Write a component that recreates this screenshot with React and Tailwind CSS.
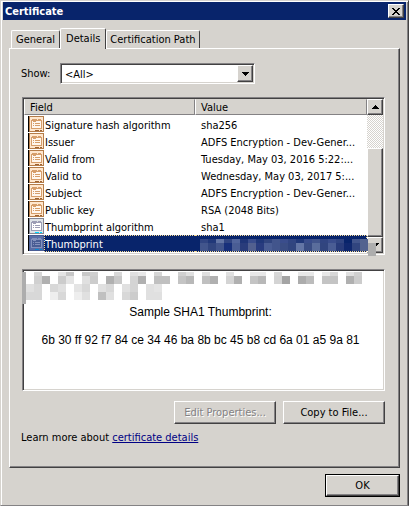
import React from 'react';

const FONT = 'font-["DejaVu_Sans_Condensed","Noto_Sans",sans-serif]';

const raised =
  'border border-t-white border-l-white border-r-[#424142] border-b-[#424142] bg-[#d6d3ce] shadow-[inset_-1px_-1px_0_#848284]';
const sunken =
  'border border-t-[#848284] border-l-[#848284] border-r-white border-b-white shadow-[inset_1px_1px_0_#424142,inset_-1px_-1px_0_#d6d3ce]';

const fields = [
  { name: 'Signature hash algorithm', value: 'sha256', tone: 'orange' },
  { name: 'Issuer', value: 'ADFS Encryption - Dev-Gener...', tone: 'orange' },
  { name: 'Valid from', value: 'Tuesday, May 03, 2016 5:22:...', tone: 'orange' },
  { name: 'Valid to', value: 'Wednesday, May 03, 2017 5:...', tone: 'orange' },
  { name: 'Subject', value: 'ADFS Encryption - Dev-Gener...', tone: 'orange' },
  { name: 'Public key', value: 'RSA (2048 Bits)', tone: 'orange' },
  { name: 'Thumbprint algorithm', value: 'sha1', tone: 'gray' },
  { name: 'Thumbprint', value: '', tone: 'blue', selected: true },
];

const tones = {
  orange: { edge: '#b57d4a', fill: '#ffe7ce', line: '#d69e6b', card: '#fff7ef', dot: '#9c6131' },
  gray: { edge: '#848694', fill: '#dee3e7', line: '#9c9eb5', card: '#ffffff', dot: '#00d7ff' },
  blue: { edge: '#4a5d94', fill: '#5a6da5', line: '#8492bd', card: '#4a5d94', dot: '#0886ce' },
};

const FieldIcon = ({ tone }) => {
  const t = tones[tone];
  return (
    <svg className="shrink-0" width="16" height="16" viewBox="0 0 16 16" shapeRendering="crispEdges" aria-hidden="true">
      <rect width="1" height="16" fill="#000" />
      <rect x="1" width="15" height="16" fill={t.edge} />
      <rect x="2" y="1" width="13" height="14" fill={t.fill} />
      <rect x="3" y="4" width="11" height="9" fill={t.line} />
      <rect x="4" y="5" width="9" height="7" fill={t.card} />
      <path d="M4 3h5v1h-5zM10 3h3v1h-3zM5 5h3v1h-3zM5 7h1v1h-1zM7 7h5v1h-5zM5 9h1v1h-1zM7 9h5v1h-5z" fill={t.line} />
      <rect x="7" y="14" width="4" height="1" fill={t.dot} />
      <rect x="12" y="14" width="2" height="1" fill={t.dot} />
    </svg>
  );
};

// redacted value blocks: column offset -> gray level
const grayRows = [
  { y: 0, h: 4, cells: { 12: 'd6', 36: 'e4', 44: 'c6', 60: 'c8', 68: 'd0', 92: 'd8', 108: 'e0', 116: 'e8', 132: 'd6', 156: 'd0', 164: 'e0', 180: 'e0', 204: 'e0', 228: 'e8', 236: 'e8', 252: 'd8', 276: 'e8', 284: 'e8', 300: 'e8', 308: 'd8', 324: 'e0', 332: 'd0' } },
  { y: 4, h: 8, cells: { 12: 'd0', 20: 'b0', 36: 'cc', 44: 'e4', 60: 'e0', 68: 'cc', 84: 'b0', 92: 'c8', 108: 'd4', 116: 'b0', 132: 'c0', 140: 'c0', 156: 'c4', 164: 'b8', 180: 'c0', 188: 'b0', 204: 'd4', 212: 'b0', 228: 'c4', 236: 'b8', 252: 'd4', 260: 'a4', 276: 'ac', 284: 'bc', 300: 'c4', 308: 'c4', 324: 'b0', 332: 'cc' } },
  { y: 12, h: 8, cells: { 4: 'e0', 12: 'd8', 28: 'd8', 36: 'e0', 52: 'e4', 60: 'd8', 76: 'e0', 84: 'd8', 100: 'e0', 108: 'd4', 124: 'e0', 132: 'e4' } },
  { y: 20, h: 8, cells: { 4: 'd8', 12: 'd8', 28: 'ee', 36: 'd8', 52: 'ee', 60: 'e0', 76: 'c0', 84: 'e0', 100: 'd8', 108: 'cc', 124: 'e0', 132: 'e0' } },
];

const GrayBlocks = () => (
  <svg className="absolute top-[3px] left-0" width="344" height="32" shapeRendering="crispEdges" aria-hidden="true">
    <rect width="4" height="32" fill="#adadad" />
    {grayRows.map((row) =>
      Object.entries(row.cells).map(([x, c]) => (
        <rect key={`${x}-${row.y}`} x={x} y={row.y} width="8" height={row.h} fill={`#${c}${c}${c}`} />
      ))
    )}
  </svg>
);

const blueTop = ['314582', '213879', '6375a5', '314582', '52659c', '1f3577', '3a4d8c', '213879', '31457f', '42558c', '3a4d8c', '314582', '213879', '3a4d8c', '42558c', '314582', '3a4d8c', '314582', '08246b', '42558c', '53638f'];
const blueBottom = ['42558c', '31457f', '42558c', '18307b', '4a5d94', '293c7b', '52608f', '293c7f', '4a5d94', '42558c', '3a4d84', '31457f', '6375a5', '3a4d84', '5a6d9c', '31457f', '4a5d94', '293c7b', '10286f', '31457f', '53638f'];

const BlueBlocks = () => (
  <svg className="absolute top-[141px] left-[177px]" width="177" height="17" shapeRendering="crispEdges" aria-hidden="true">
    {blueTop.map((c, i) => (
      <rect key={i} x={i * 8} y="0" width="8" height="4" fill={`#${c}`} />
    ))}
    {blueBottom.map((c, i) => (
      <rect key={i} x={i * 8} y="4" width="8" height="8" fill={`#${c}`} />
    ))}
    <rect x="168" y="4" width="8" height="13" fill="#adadad" />
  </svg>
);

const Arrow = ({ up }) => (
  <svg width="7" height="4" viewBox="0 0 7 4" shapeRendering="crispEdges" aria-hidden="true">
    <path d={up ? 'M3 0h1v1h1v1h1v1h1v1h-7v-1h1v-1h1v-1h1z' : 'M0 0h7v1h-1v1h-1v1h-1v1h-1v-1h-1v-1h-1v-1h-1z'} />
  </svg>
);

const Tab = ({ children, active }) => (
  <button
    type="button"
    role="tab"
    aria-selected={Boolean(active)}
    className={`rounded-t-[2px] border border-b-0 border-t-white border-l-white border-r-[#424142] bg-[#d6d3ce] ${
      active ? 'z-10 -mb-px h-[21px] px-[5px] pb-[2px]' : 'h-[18px] px-[3px] first:px-1'
    }`}
  >
    {children}
  </button>
);

const Scrollbar = () => (
  <div className="flex w-4 flex-col bg-[repeating-conic-gradient(#ffffff_0_25%,#d6d3ce_0_50%)] bg-[length:2px_2px]">
    <button type="button" aria-label="Scroll up" className={`${raised} flex h-4 items-center justify-center`}>
      <Arrow up />
    </button>
    <div className="h-[33px]" />
    <div className={`${raised} flex-1`} />
    <button type="button" aria-label="Scroll down" className={`${raised} flex h-4 items-center justify-center`}>
      <Arrow />
    </button>
  </div>
);

const FieldList = () => (
  <div className={`${sunken} relative mt-[13px] flex items-stretch bg-white p-px`}>
    <div className="flex-1 pb-px">
      <table className="w-full table-fixed border-separate border-spacing-0 text-left">
        <thead>
          <tr>
            {['Field', 'Value'].map((label) => (
              <th key={label} className={`p-0 pb-px font-normal ${label === 'Field' ? 'w-[171px]' : ''}`}>
                <div className="h-4 border border-t-[#d6d3ce] border-l-white border-r-[#848284] border-b-[#848284] bg-[#d6d3ce] px-[5px] leading-4">
                  {label}
                </div>
              </th>
            ))}
          </tr>
        </thead>
        <tbody>
          {fields.map((f) => (
            <tr key={f.name}>
              <td className="p-0">
                <div className="flex pl-1">
                  <FieldIcon tone={f.tone} />
                  <span
                    className={`h-[17px] flex-1 border border-r-0 border-dotted ${
                      f.selected ? 'border-[#f7db94] bg-[#08246b] text-white' : 'border-transparent'
                    }`}
                  >
                    {f.name}
                  </span>
                </div>
              </td>
              <td className="p-0">
                <div
                  className={`h-[17px] border border-l-0 border-dotted pl-[6px] whitespace-nowrap ${
                    f.selected ? 'border-[#f7db94] bg-[#08246b]' : 'border-transparent'
                  }`}
                >
                  {f.value}
                </div>
              </td>
            </tr>
          ))}
        </tbody>
      </table>
    </div>
    <Scrollbar />
    <BlueBlocks />
  </div>
);

export default function App() {
  return (
    <div
      className={`${FONT} flex min-h-screen flex-col border border-t-[#d6d3ce] border-l-[#d6d3ce] border-r-[#424142] border-b-[#848284] bg-[#d6d3ce] px-[2px] pt-px text-[11px] leading-[17px] text-black shadow-[inset_1px_1px_0_#ffffff,inset_-1px_0_0_#848284]`}
    >
      <header className="flex h-[18px] items-center justify-between bg-[#08246b] px-[2px]">
        <h1 className="font-bold text-white">Certificate</h1>
        <button type="button" aria-label="Close" className={`${raised} flex h-[14px] w-4 items-center justify-center`}>
          <svg width="8" height="7" viewBox="0 0 8 7" shapeRendering="crispEdges" aria-hidden="true">
            <path d="M0 0h2v1h1v1h2v-1h1v-1h2v1h-1v1h-1v1h-1v1h1v1h1v1h1v1h-2v-1h-1v-1h-2v1h-1v1h-2v-1h1v-1h1v-1h1v-1h-1v-1h-1v-1h-1z" />
          </svg>
        </button>
      </header>

      <div className="flex flex-1 flex-col px-[6px] pt-2">
        <div role="tablist" className="flex items-end px-[2px]">
          <Tab>General</Tab>
          <Tab active>Details</Tab>
          <Tab>Certification Path</Tab>
        </div>

        <main className={`${raised} pt-[14px] pr-[14px] pb-[21px] pl-3`}>
          <div className="-ml-px flex items-center">
            <label htmlFor="show" className="w-[39px]">Show:</label>
            <div className={`${sunken} relative h-[21px] w-[195px] bg-white p-[2px]`}>
              <select id="show" className="block h-full w-full appearance-none px-[2px] leading-[17px] outline-none">
                <option>&lt;All&gt;</option>
              </select>
              <span className={`${raised} pointer-events-none absolute top-px right-px flex h-[17px] w-4 items-center justify-center`}>
                <Arrow />
              </span>
            </div>
          </div>

          <FieldList />

          <div className="relative mt-[14px]">
            <textarea
              readOnly
              aria-label="Field value"
              className={`${sunken} block h-[122px] w-full resize-none overflow-hidden bg-white pt-[35px] pr-[6px] text-center font-["Liberation_Sans",Arial,sans-serif] text-[12px] leading-[14px] outline-none`}
              value={'Sample SHA1 Thumbprint:\n\n6b 30 ff 92 f7 84 ce 34 46 ba 8b bc 45 b8 cd 6a 01 a5 9a 81'}
            />
            <GrayBlocks />
          </div>

          <div className="mt-[10px] flex justify-end gap-[7px]">
            <button type="button" disabled className={`${raised} h-[23px] w-[102px] text-[#848284] [text-shadow:1px_1px_0_#ffffff]`}>
              Edit Properties...
            </button>
            <button type="button" className={`${raised} h-[23px] w-[102px]`}>
              Copy to File...
            </button>
          </div>

          <p className="mt-[5px] -ml-px">
            Learn more about{' '}
            <a href="#details" className="text-[#000084] underline">certificate details</a>
          </p>
        </main>

        <div className="mt-[6px] flex justify-end">
          <button type="button" className="h-[23px] w-[75px] border border-black">
            <span className={`${raised} flex h-full items-center justify-center`}>OK</span>
          </button>
        </div>
      </div>
    </div>
  );
}
